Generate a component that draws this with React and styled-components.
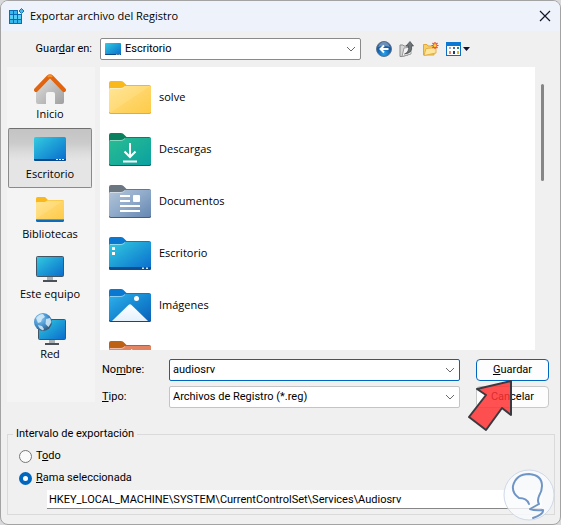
import React from 'react'
import styled, { createGlobalStyle, css } from 'styled-components'

const GlobalStyle = createGlobalStyle`
    * { box-sizing: border-box; }
    body {
        margin: 0;
        background: #d9d9dc;
    }
    svg { display: block; flex: none; }
    button, input, select { font: inherit; color: inherit; }
`

const uiFont = css`
    font-family: "Open Sans", "Noto Sans", sans-serif;
    font-size: 11px;
    line-height: 16px;
`

const formFont = css`
    font-family: Roboto, "Liberation Sans", sans-serif;
    font-size: 11px;
    line-height: 16px;
`

const Dialog = styled.div`
    ${formFont}
    position: relative;
    display: flex;
    flex-direction: column;
    height: 100vh;
    min-height: 460px;
    padding-bottom: 9px;
    overflow: hidden;
    color: #000;
    background: #f0f0f0;
    border: 1px solid #a3a3a3;
    border-radius: 8px;
`

const TitleBar = styled.header`
    ${uiFont}
    display: flex;
    align-items: center;
    gap: 5px;
    height: 30px;
    padding: 0 9px 0 7px;
    background: #eef3fb;
`

const Title = styled.h1`
    flex: 1;
    margin: 0;
    font-size: inherit;
    font-weight: 400;
`

const IconButton = styled.button`
    display: flex;
    padding: 0;
    border: 0;
    background: none;
`

const Toolbar = styled.div`
    display: flex;
    align-items: center;
    height: 36px;
    padding-left: 6px;
`

const LookInLabel = styled.label`
    width: 93px;
    padding-right: 8px;
    text-align: right;
`

const Combo = styled.div`
    display: flex;
    align-items: center;
    gap: 4px;
    flex: ${p => (p.$grow ? '1' : '0 1 261px')};
    min-width: 0;
    height: 22px;
    padding: 0 4px;
    background: #fff;
    border: 1px solid ${p => p.$border || '#c4c4c4'};
    border-radius: 2px;
`

const Select = styled.select`
    flex: 1;
    min-width: 0;
    padding: 0;
    border: 0;
    outline: 0;
    appearance: none;
    background: none;
`

const TextInput = styled.input`
    flex: 1;
    min-width: 0;
    padding: 0;
    border: 0;
    outline: 0;
    background: none;
`

const Tools = styled.div`
    display: flex;
    align-items: center;
    gap: 7px;
    padding-left: 15px;
`

const Body = styled.div`
    display: flex;
    flex: 1;
    gap: 5px;
    min-height: 0;
    padding-left: 6px;
`

const Places = styled.nav`
    ${uiFont}
    width: 88px;
    flex: none;
    margin-bottom: 6px;
    padding: 1px 3px 0 1px;
    background: #f4f4f4;
`

const Place = styled.button`
    display: flex;
    flex-direction: column;
    align-items: center;
    justify-content: flex-end;
    gap: 1px;
    width: 100%;
    height: 60px;
    padding: 0 0 5px;
    border: 1px solid transparent;
    border-radius: 2px;
    background: none;
    white-space: nowrap;
    ${p => p.$active && css`
        border-color: #6f6f6f #8a8a8a #8a8a8a;
        background: linear-gradient(#c4c4c4, #cbcbcb 14px, #dcdcdc 24px, #e5e5e5 32px);
    `}
`

const PlaceIcon = styled.span`
    display: flex;
    align-items: center;
    height: 32px;
`

const Main = styled.div`
    display: flex;
    flex-direction: column;
    flex: 1;
    min-width: 0;
`

const ListArea = styled.div`
    display: flex;
    flex: 1;
    min-height: 0;
`

const FileList = styled.ul`
    ${uiFont}
    flex: 1;
    margin: 0;
    padding: 4px 0 0 9px;
    overflow: hidden;
    list-style: none;
    background: #fff;
`

const FileItem = styled.li`
    display: flex;
    align-items: center;
    gap: 8px;
    height: 52px;
`

const ScrollTrack = styled.div`
    width: 25px;
    padding: 17px 0 0 6px;
`

const ScrollThumb = styled.div`
    width: 3px;
    height: 97px;
    border-radius: 2px;
    background: #868686;
`

const Form = styled.div`
    display: grid;
    grid-template-columns: 69px 1fr 73px;
    align-items: center;
    row-gap: 5px;
    padding: 9px 11px 0 0;
`

const FieldLabel = styled.label`
    padding-left: 2px;
`

const ActionCell = styled.div`
    position: relative;
`

const Field = styled(Combo)`
    margin-right: 16px;
    padding-left: 3px;
`

const PushButton = styled.button`
    display: block;
    width: 100%;
    height: 22px;
    padding: 0;
    text-align: center;
    background: #fdfdfd;
    border: 1px solid ${p => (p.$primary ? '#0067c0' : '#c8c8c8')};
    border-radius: 4px;
`

const Pointer = styled.svg`
    position: absolute;
    top: -9px;
    left: -12px;
    pointer-events: none;
`

const Range = styled.fieldset`
    display: flex;
    flex-direction: column;
    gap: 6px;
    min-width: 0;
    margin: 18px 5px 0 6px;
    padding: 6px 12px 5px 11px;
    border: 1px solid #dadada;
`

const Legend = styled.legend`
    margin-left: -6px;
    padding: 0 3px;
`

const RadioRow = styled.div`
    display: flex;
    align-items: center;
    gap: 4px;
`

const Radio = styled.input`
    width: 13px;
    height: 13px;
    margin: 0;
    appearance: none;
    background: #fafafa;
    border: 1px solid #777;
    border-radius: 50%;
    &:checked {
        background: #fff;
        border: 4px solid #0067c0;
    }
`

const BranchInput = styled.input`
    height: 19px;
    margin: -2px 0 0 28px;
    padding: 0 2px;
    outline: 0;
    background: #fff;
    border: 0;
    border-bottom: 1px solid #868686;
`

const Watermark = styled.svg`
    position: absolute;
    right: 5px;
    bottom: 3px;
    pointer-events: none;
`

const Chevron = () => (
    <svg width="10" height="6" viewBox="0 0 10 6" fill="none" stroke="#6a6a6a">
        <path d="M1 1l4 4 4-4" />
    </svg>
)

const Gradients = () => (
    <svg width="0" height="0" style={{ position: 'absolute' }} aria-hidden="true">
        <defs>
            <linearGradient id="screen" x1="0" y1="0" x2="1" y2="1">
                <stop offset="0" stopColor="#35cbe0" />
                <stop offset="0.5" stopColor="#1c9bd6" />
                <stop offset="1" stopColor="#0a6bcd" />
            </linearGradient>
            <linearGradient id="yellow" x1="0" y1="0" x2="1" y2="1">
                <stop offset="0" stopColor="#ffe596" />
                <stop offset="0.48" stopColor="#ffdb78" />
                <stop offset="0.5" stopColor="#ffd569" />
                <stop offset="1" stopColor="#fdcb47" />
            </linearGradient>
            <linearGradient id="green" x1="0" y1="0" x2="1" y2="1">
                <stop offset="0" stopColor="#29bd93" />
                <stop offset="0.5" stopColor="#1aaf98" />
                <stop offset="1" stopColor="#0aa0a3" />
            </linearGradient>
            <linearGradient id="slate" x1="0" y1="0" x2="1" y2="1">
                <stop offset="0" stopColor="#b3c5d9" />
                <stop offset="0.5" stopColor="#8ea9c9" />
                <stop offset="1" stopColor="#6485b0" />
            </linearGradient>
            <linearGradient id="blue" x1="0" y1="0" x2="1" y2="1">
                <stop offset="0" stopColor="#2fb2ec" />
                <stop offset="0.5" stopColor="#1688d2" />
                <stop offset="1" stopColor="#0a5fb8" />
            </linearGradient>
            <linearGradient id="snow" x1="0" y1="0" x2="0" y2="1">
                <stop offset="0" stopColor="#fff" />
                <stop offset="1" stopColor="#e4f1fd" />
            </linearGradient>
            <linearGradient id="orange" x1="0" y1="0" x2="1" y2="1">
                <stop offset="0" stopColor="#e58a68" />
                <stop offset="1" stopColor="#dd7a5a" />
            </linearGradient>
            <linearGradient id="wall" x1="0" y1="0" x2="1" y2="1">
                <stop offset="0" stopColor="#e2e2e2" />
                <stop offset="1" stopColor="#9f9f9f" />
            </linearGradient>
            <radialGradient id="ball" cx="0.5" cy="0.8" r="0.7">
                <stop offset="0" stopColor="#28a4ee" />
                <stop offset="0.6" stopColor="#1561ad" />
                <stop offset="1" stopColor="#23548c" />
            </radialGradient>
            <radialGradient id="globe" cx="0.35" cy="0.3" r="0.75">
                <stop offset="0" stopColor="#8fcbf2" />
                <stop offset="0.6" stopColor="#3f8ccb" />
                <stop offset="1" stopColor="#3b4f66" />
            </radialGradient>
        </defs>
    </svg>
)

const Folder = ({ fill, tab, edge, children }) => (
    <svg width="42" height="33" viewBox="0 0 42 33">
        <path d="M0 2Q0 0 2 0H12Q14 0 15.500 2L17.500 4H40Q42 4 42 6V12H0Z" fill={tab} />
        <path d="M0 8Q0 7 1.500 7H12Q14 7 15.500 5.500L16 5H41Q42 5 42 6V31Q42 33 40 33H2Q0 33 0 31Z" fill={`url(#${fill})`} />
        <path d="M1 7.500H12Q14 7.500 16 5.500" fill="none" stroke="#fff" strokeOpacity="0.45" />
        <path d="M0 31Q0 32.500 2 32.500H40Q42 32.500 42 31" fill="none" stroke={edge} />
        {children}
    </svg>
)

const RegistryIcon = () => (
    <svg width="17" height="17" viewBox="0 0 17 17">
        <path d="M1 2h9v4h4v10H1z" fill="#0b6cb4" />
        <g fill="#36b7ee">
            <path d="M2 3h3v3H2zM6 3h3v3H6z" />
            <path d="M2 7h3v4H2zM6 7h3v4H6zM10 7h3v4h-3z" fill="#55cdf5" />
            <path d="M2 12h3v3H2zM6 12h3v3H6zM10 12h3v3h-3z" />
        </g>
        <path d="M13.500 0.500l2.500 2.500-2.500 2.500L11 3z" fill="#46b9e9" stroke="#1873b0" />
    </svg>
)

const DesktopIcon = ({ width, height }) => (
    <svg width={width} height={height} viewBox="0 0 32 24">
        <rect width="32" height="24" rx="1.500" fill="url(#screen)" />
        <path d="M0 22h32v.5a1.500 1.500 0 0 1-1.500 1.500h-29A1.500 1.500 0 0 1 0 22.500z" fill="#0b4a86" />
        <path d="M22 22h2v1h-2zM25 22h2v1h-2zM28 22h2v1h-2z" fill="#fff" />
    </svg>
)

const HomeIcon = () => (
    <svg width="32" height="31" viewBox="0 0 32 31">
        <path d="M2 16L16 3l14 13v12q0 2-2 2h-7V20q0-2-2-2h-5q-2 0-2 2v10H4q-2 0-2-2z" fill="url(#wall)" />
        <path d="M2 16L14.500 3q1.500-1.500 3 0L30 16" fill="none" stroke="#e2640e" strokeWidth="4" strokeLinecap="round" strokeLinejoin="round" />
        <path d="M14 3q2-2.500 4 0" fill="none" stroke="#f7932a" strokeWidth="2" />
    </svg>
)

const LibraryIcon = () => (
    <svg width="28" height="25" viewBox="0 0 28 25">
        <path d="M0 1.500Q0 0 1.500 0H9L12 3H26.500Q28 3 28 4.500V10H0Z" fill="#f9b91c" />
        <path d="M0 6Q0 5 1 5H9L11.500 3.500H27Q28 3.500 28 4.500V22H0Z" fill="url(#yellow)" />
        <path d="M0 22h28v1.500q0 1.500-1.500 1.500h-25Q0 25 0 23.500z" fill="#0b6cbf" />
        <path d="M0 22.500h28" stroke="#31a8e8" />
    </svg>
)

const MonitorIcon = () => (
    <svg width="30" height="26" viewBox="0 0 30 26">
        <rect x="1.500" y="0.500" width="27" height="20" rx="1" fill="url(#screen)" stroke="#435564" />
        <path d="M12 21h6v3h-6z" fill="#a9b0b6" />
        <path d="M8 24h14v2H8z" fill="#4a5158" />
    </svg>
)

const NetworkIcon = () => (
    <svg width="32" height="32" viewBox="0 0 32 32">
        <rect x="4.500" y="6.500" width="27" height="20" rx="1" fill="url(#screen)" stroke="#435564" />
        <path d="M15 27h6v3h-6z" fill="#a9b0b6" />
        <path d="M11 30h14v2H11z" fill="#4a5158" />
        <circle cx="9" cy="9" r="9" fill="url(#globe)" />
        <path d="M2 5q3-4 7-4l2 3-3 2-1 3-3 1zM12 6l4-1 1.500 4-3 5-3-3zM4 12l4 1 2 3-1 1.500Q5 16 4 12z" fill="#d8ecf8" fillOpacity="0.85" />
    </svg>
)

const BackIcon = () => (
    <svg width="16" height="16" viewBox="0 0 16 16">
        <circle cx="8" cy="8" r="7.500" fill="url(#ball)" stroke="#5b7590" />
        <path d="M2 6q2-5 6-5t6 5q-6-2-12 0z" fill="#fff" fillOpacity="0.35" />
        <path d="M12.500 8H5M8 4.500L4.500 8 8 11.500" fill="none" stroke="#fff" strokeWidth="2" />
    </svg>
)

const UpIcon = () => (
    <svg width="16" height="16" viewBox="0 0 16 16">
        <path d="M1 4h3l1 1h4v9l-6 1.500H1z" fill="#d6d6d6" stroke="#8b8b8b" />
        <path d="M3 15.500L5 7l7-1v7z" fill="#f4f4f4" stroke="#9a9a9a" />
        <path d="M5.500 13q5-2 4-8H7l4-4.500L14.500 5h-2q1.500 7-7 8z" fill="#6d7377" stroke="#44494c" strokeWidth="0.700" />
    </svg>
)

const NewFolderIcon = () => (
    <svg width="17" height="16" viewBox="0 0 17 16">
        <path d="M1.500 14V3.500H5l1 1.500h6v9z" fill="#f8cf66" stroke="#dfa83c" />
        <path d="M2 14.500L4 7.500l10-1V12z" fill="#fde59b" stroke="#e3b048" />
        <g stroke="#e9432d" strokeWidth="1.200">
            <path d="M13 1v7M9.500 4.500h7M10.500 2l5 5M15.500 2l-5 5" />
        </g>
        <circle cx="13" cy="4.500" r="1.500" fill="#fdd835" />
    </svg>
)

const ViewMenuIcon = () => (
    <svg width="25" height="15" viewBox="0 0 25 15">
        <rect x="0.500" y="0.500" width="14" height="13" fill="#fff" stroke="#0b6cc4" />
        <path d="M0 0h15v4H0z" fill="#0b78d4" />
        <path d="M3 5h2v2H3z" fill="#9bb0c4" />
        <path d="M7 5h2v2H7z" fill="#3f74a8" />
        <path d="M11 5h2v2h-2z" fill="#2e8b72" />
        <path d="M3 9h2v3H3z" fill="#f08070" />
        <path d="M7 9h2v3H7z" fill="#123f7d" />
        <path d="M11 9h2v3h-2z" fill="#e0b420" />
        <path d="M17 5h7l-3.500 4z" fill="#101030" />
    </svg>
)

const CloseIcon = () => (
    <svg width="12" height="12" viewBox="0 0 12 12" stroke="#15152a" strokeWidth="1.200">
        <path d="M1 1l10 10M11 1L1 11" />
    </svg>
)

const folders = [
    { id: 1, name: 'solve', icon: <Folder fill="yellow" tab="#f9b91c" edge="#e5ad2e" /> },
    {
        id: 2,
        name: 'Descargas',
        icon: <Folder fill="green" tab="#0b805e" edge="#0b6172">
            <path d="M21 10v14M15.500 18.500L21 24l5.500-5.500M14 28.500h14" fill="none" stroke="#fff" strokeWidth="2" />
        </Folder>
    },
    {
        id: 3,
        name: 'Documentos',
        icon: <Folder fill="slate" tab="#6c7680" edge="#4b5c72">
            <path d="M11 11h10M11 16h10M11 21h20M11 26h20" stroke="#fff" strokeWidth="2" />
            <rect x="24" y="10" width="7" height="7" rx="1" fill="#fff" />
        </Folder>
    },
    {
        id: 4,
        name: 'Escritorio',
        icon: <Folder fill="screen" tab="#0a78d1" edge="#0b4a86">
            <path d="M3 10h3v3H3zM3 15h3v3H3z" fill="#fff" />
            <path d="M0 30h42v1q0 2-2 2H2q-2 0-2-2z" fill="#0a4f93" />
            <path d="M33 30.500h2v1.500h-2zM37 30.500h2v1.500h-2z" fill="#cfe7f7" />
        </Folder>
    },
    {
        id: 5,
        name: 'Imágenes',
        icon: <Folder fill="blue" tab="#0a78d1" edge="#0b4a86">
            <path d="M3 32L19.500 16q1.500-1.500 3 0L39 32z" fill="url(#snow)" />
            <circle cx="27.500" cy="9.500" r="2.500" fill="#fff" />
        </Folder>
    },
    {
        id: 6,
        icon: <Folder fill="orange" tab="#bd6114" edge="#a34a2c">
            <path d="M22 8l8 4.500-8 4.500z" fill="#fff" />
        </Folder>
    }
]

const places = [
    { name: 'Inicio', icon: <HomeIcon /> },
    { name: 'Escritorio', icon: <DesktopIcon width="32" height="24" />, active: true },
    { name: 'Bibliotecas', icon: <LibraryIcon /> },
    { name: 'Este equipo', icon: <MonitorIcon /> },
    { name: 'Red', icon: <NetworkIcon /> }
]

const App = () => {
    const renderPlaces = places.map(place => (
        <Place key={place.name} type="button" $active={place.active}>
            <PlaceIcon>{place.icon}</PlaceIcon>
            {place.name}
        </Place>
    ))

    const renderFolders = folders.map(folder => (
        <FileItem key={folder.id}>
            {folder.icon}
            {folder.name}
        </FileItem>
    ))

    return (
        <>
            <GlobalStyle />
            <Gradients />
            <Dialog role="dialog" aria-labelledby="title">
                <TitleBar>
                    <RegistryIcon />
                    <Title id="title">Exportar archivo del Registro</Title>
                    <IconButton type="button" aria-label="Cerrar"><CloseIcon /></IconButton>
                </TitleBar>
                <Toolbar>
                    <LookInLabel htmlFor="folder">Guar<u>d</u>ar en:</LookInLabel>
                    <Combo $border="#8a8a8a">
                        <DesktopIcon width="16" height="12" />
                        <Select id="folder"><option>Escritorio</option></Select>
                        <Chevron />
                    </Combo>
                    <Tools>
                        <IconButton type="button" aria-label="Atrás"><BackIcon /></IconButton>
                        <IconButton type="button" aria-label="Subir un nivel"><UpIcon /></IconButton>
                        <IconButton type="button" aria-label="Nueva carpeta"><NewFolderIcon /></IconButton>
                        <IconButton type="button" aria-label="Vistas"><ViewMenuIcon /></IconButton>
                    </Tools>
                </Toolbar>
                <Body>
                    <Places>{renderPlaces}</Places>
                    <Main>
                        <ListArea>
                            <FileList>{renderFolders}</FileList>
                            <ScrollTrack><ScrollThumb /></ScrollTrack>
                        </ListArea>
                        <Form>
                            <FieldLabel htmlFor="name">No<u>m</u>bre:</FieldLabel>
                            <Field $grow $border="#0067c0">
                                <TextInput id="name" defaultValue="audiosrv" />
                                <Chevron />
                            </Field>
                            <PushButton type="button" $primary><u>G</u>uardar</PushButton>
                            <FieldLabel htmlFor="type"><u>T</u>ipo:</FieldLabel>
                            <Field $grow>
                                <Select id="type"><option>Archivos de Registro (*.reg)</option></Select>
                                <Chevron />
                            </Field>
                            <ActionCell>
                                <PushButton type="button">Cancelar</PushButton>
                                <Pointer width="52" height="58" viewBox="0 0 52 58">
                                    <path d="M47 4L13 12l9 6L5 40l17 13 16-22 9 7z" fill="#ff3333" fillOpacity="0.85" stroke="#3a3a40" strokeWidth="2" strokeLinejoin="round" />
                                </Pointer>
                            </ActionCell>
                        </Form>
                    </Main>
                </Body>
                <Range>
                    <Legend>Intervalo de exportación</Legend>
                    <RadioRow>
                        <Radio type="radio" name="range" id="all" />
                        <label htmlFor="all">T<u>o</u>do</label>
                    </RadioRow>
                    <RadioRow>
                        <Radio type="radio" name="range" id="branch" defaultChecked />
                        <label htmlFor="branch"><u>R</u>ama seleccionada</label>
                    </RadioRow>
                    <BranchInput
                        type="text"
                        aria-label="Rama"
                        defaultValue="HKEY_LOCAL_MACHINE\SYSTEM\CurrentControlSet\Services\Audiosrv"
                    />
                </Range>
                <Watermark width="52" height="52" viewBox="0 0 52 52">
                    <circle cx="26" cy="26" r="25" fill="#fafbfe" fillOpacity="0.8" stroke="#cfd9e8" />
                    <path d="M26 35Q24 29 16 29 9 24 10 17 13 5 26 5 39 6 39 17 39 22 36 27 34 32 36 35L27 40Q32 42 40 41 41 45 30 49" fill="none" stroke="#6f95c6" strokeWidth="2" strokeLinejoin="round" strokeLinecap="round" />
                </Watermark>
            </Dialog>
        </>
    )
}

export default App
